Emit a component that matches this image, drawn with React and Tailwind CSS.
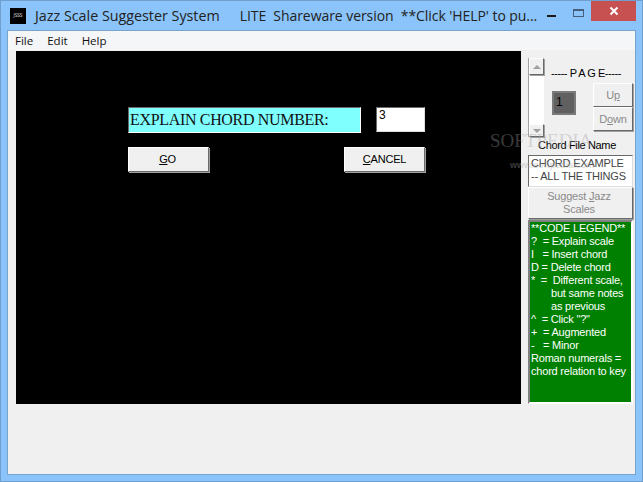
import React from "react";

const raised = "border border-t-white border-l-white border-r-[#696969] border-b-[#696969] shadow-[1px_1px_0_#a0a0a0]";
const small = "text-[11px] tracking-[-0.2px]";

const legend = [
  "**CODE LEGEND**",
  "?  = Explain scale",
  "I   = Insert chord",
  "D = Delete chord",
  "*  =  Different scale,",
  "       but same notes",
  "       as previous",
  "^  = Click \"?\"",
  "+  = Augmented",
  "-   = Minor",
  "Roman numerals =",
  "chord relation to key",
];

const PanelButton = ({ children, className }) => (
  <button className={`block bg-[#f0f0f0] text-[#8a8a8a] leading-[13px] ${small} ${raised} ${className}`}>
    {children}
  </button>
);

const App = () => {
  return (
    <div className="relative w-[643px] h-[482px] overflow-hidden bg-[#8ac4fa] border border-[#6f9fce] font-['Liberation_Sans',sans-serif]">
      {/* title bar */}
      <div className="flex items-center h-[29px] pl-[9px] pr-[6px] text-[#222] font-['Open_Sans',sans-serif] text-[14px]">
        <div className="w-[16px] h-[16px] bg-black text-[#ddd] text-[5px] tracking-[-0.2px] flex items-center justify-center">JSSS</div>
        <span className="ml-[9px] whitespace-pre text-[14.3px]">Jazz Scale Suggester System</span>
        <span className="ml-[20px] whitespace-pre tracking-[-0.06px]">LITE  Shareware version  **Click 'HELP' to pu...</span>
        <div className="ml-auto w-[9px] h-[2px] bg-[#1a1a1a]"></div>
        <div className="ml-[17px] w-[11px] h-[8px] border border-[#44607c] border-t-2 mb-[5px]"></div>
        <div className="ml-[7px] self-start w-[45px] h-[20px] bg-[#c75050] text-white flex items-center justify-center">
          <svg width="10" height="10" viewBox="0 0 10 10">
            <path d="M1.5 1.5L8.5 8.5M8.5 1.5L1.5 8.5" stroke="white" strokeWidth="2" />
          </svg>
        </div>
      </div>

      {/* client area */}
      <div className="mx-[6px] h-[445px] border border-[#78a3cc] bg-[#f0f0f0] flex flex-col">
        <div className="flex items-center h-[19px] bg-[#f5f6f7] pl-[7px] pt-[1px] gap-[14px] text-[11.5px] text-[#111] font-['Open_Sans',sans-serif]">
          <span>File</span>
          <span>Edit</span>
          <span>Help</span>
        </div>
        <div className="flex pl-[8px] pt-[1px]">
          {/* black canvas */}
          <div className="shrink-0 w-[505px] h-[353px] bg-black pt-[56px] pl-[112px]">
            <div className="flex">
              <div className="w-[233px] h-[26px] bg-[#80ffff] border border-t-[#696969] border-l-[#696969] border-r-white border-b-white pl-[1px] font-['Liberation_Serif',serif] text-[16px] tracking-[-0.33px] leading-[24px] text-[#111]">
                EXPLAIN CHORD NUMBER:
              </div>
              <div className="ml-[15px] w-[49px] h-[25px] bg-white border border-t-[#696969] border-l-[#696969] border-r-[#ddd] border-b-[#ddd] pl-[2px] text-[12px] leading-[14px] text-black">
                3
              </div>
            </div>
            <div className="flex justify-between w-[297px] mt-[14px]">
              <button className={`w-[81px] h-[25px] pb-[1px] pr-[2px] bg-[#f0f0f0] text-black ${small} ${raised}`}>
                <u>G</u>O
              </button>
              <button className={`w-[81px] h-[25px] pb-[1px] bg-[#f0f0f0] text-black ${small} ${raised}`}>
                <u>C</u>ANCEL
              </button>
            </div>
          </div>

          {/* right panel */}
          <div className="ml-[7px] w-[105px] shrink-0 pt-[7px]">
            <div className="flex h-[80px]">
              <div className="shrink-0 w-[16px] h-[79px] bg-white flex flex-col justify-between border-l border-[#a0a0a0]">
                <div className={`h-[17px] bg-[#f0f0f0] flex items-center justify-center ${raised}`}>
                  <div className="w-0 h-0 border-x-[4px] border-x-transparent border-b-[4px] border-b-[#a0a0a0]"></div>
                </div>
                <div className={`h-[13px] bg-[#f0f0f0] flex items-center justify-center ${raised}`}>
                  <div className="w-0 h-0 border-x-[4px] border-x-transparent border-t-[4px] border-t-[#a0a0a0]"></div>
                </div>
              </div>
              <div className="ml-[7px] flex-1">
                <div className="text-[11px] tracking-[-0.45px] leading-[14px] mt-[8px] text-black whitespace-pre">----- P A G E-----</div>
                <div className="flex mt-[3px]">
                  <div className="shrink-0 ml-[1px] w-[24px] h-[24px] mt-[8px] bg-[#606060] border-2 border-[#7a7a7a] text-[12px] leading-[18px] pl-[2px] text-black">1</div>
                  <div className="ml-[17px] flex flex-col">
                    <PanelButton className="w-[40px] h-[24px]">U<u>p</u></PanelButton>
                    <PanelButton className="w-[40px] h-[24px]">D<u>o</u>wn</PanelButton>
                  </div>
                </div>
              </div>
            </div>
            <div className="text-[11px] tracking-[-0.35px] leading-[14px] text-center text-black pr-[7px]">Chord File Name</div>
            <div className={`mt-[3px] w-[105px] h-[32px] bg-white border border-t-[#696969] border-l-[#696969] border-r-[#ddd] border-b-[#ddd] pl-[2px] pt-[1px] ${small} leading-[13px] text-[#444] whitespace-pre overflow-hidden`}>
              {"CHORD EXAMPLE\n-- ALL THE THINGS"}
            </div>
            <PanelButton className="w-[105px] h-[32px] pr-[3px]">
              Suggest <u>J</u>azz<br />Scales
            </PanelButton>
            <div className={`mt-[1px] w-[105px] h-[184px] bg-[#008000] border-2 border-l-[#808080] border-t-[#808080] border-r-white border-b-white pl-[1px] text-white ${small} leading-[13px] whitespace-pre`}>
              {legend.join("\n")}
            </div>
          </div>
        </div>
      </div>

      {/* watermark */}
      <div className="absolute left-[489px] top-[129px] text-[19px] leading-[22px] text-[#a1a1a1] opacity-[0.36] pointer-events-none font-['Liberation_Serif',serif]">
        SOFTPEDIA
      </div>
      <div className="absolute left-[509px] top-[159px] text-[9px] leading-[10px] font-bold text-[#a1a1a1] opacity-[0.36] pointer-events-none">
        www.softpedia.com
      </div>
    </div>
  );
};

export default App;
